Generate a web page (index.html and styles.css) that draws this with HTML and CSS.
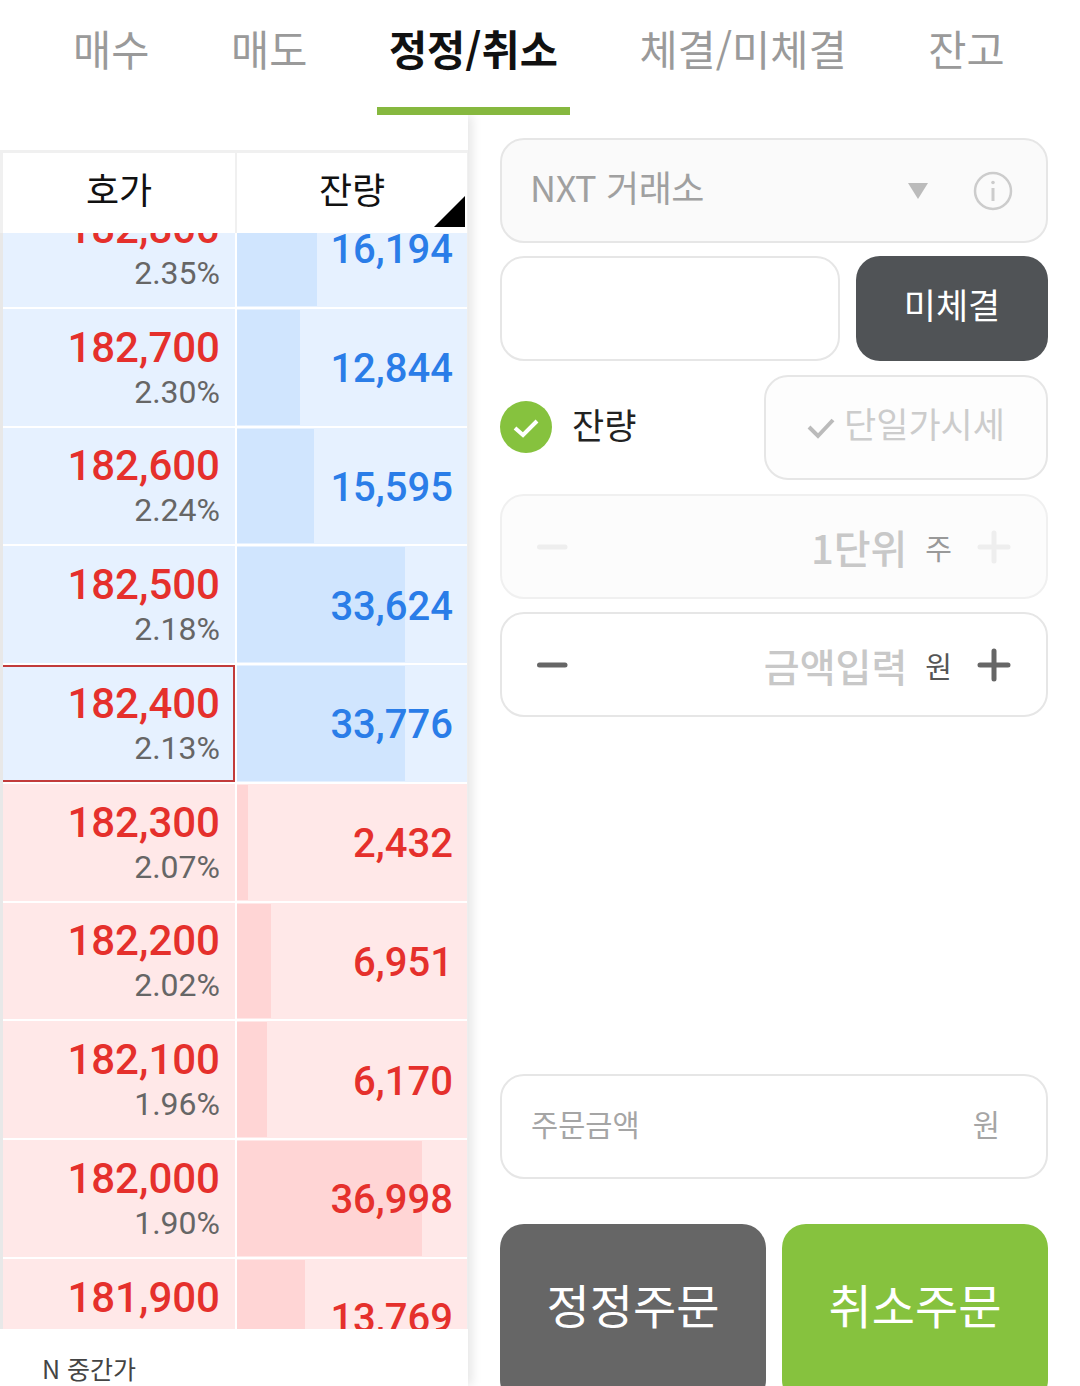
FILE: index.html
```html
<!DOCTYPE html>
<html lang="ko">
<head>
  <meta charset="UTF-8">
  <meta name="viewport" content="width=device-width, initial-scale=1.0">
  <title>정정/취소</title>
  <link rel="stylesheet" href="styles.css">
</head>
<body>
  <nav class="tabs">
    <a class="tab">매수</a>
    <a class="tab">매도</a>
    <a class="tab active">정정/취소</a>
    <a class="tab">체결/미체결</a>
    <a class="tab">잔고</a>
  </nav>

  <main class="content">
    <section class="book">
      <div class="book-head">
        <div class="head-cell">호가</div>
        <div class="head-cell">잔량
          <svg class="corner" width="31" height="31" viewBox="0 0 31 31"><path d="M31 0V31H0Z" fill="#000"/></svg>
        </div>
      </div>

      <div class="book-list">
        <div class="book-rows">
          <div class="row ask">
            <div class="price"><b>182,800</b><span>2.35%</span></div>
            <div class="volume"><i class="bar" style="width:80px"></i><b>16,194</b></div>
          </div>
          <div class="row ask">
            <div class="price"><b>182,700</b><span>2.30%</span></div>
            <div class="volume"><i class="bar" style="width:63px"></i><b>12,844</b></div>
          </div>
          <div class="row ask">
            <div class="price"><b>182,600</b><span>2.24%</span></div>
            <div class="volume"><i class="bar" style="width:77px"></i><b>15,595</b></div>
          </div>
          <div class="row ask">
            <div class="price"><b>182,500</b><span>2.18%</span></div>
            <div class="volume"><i class="bar" style="width:168px"></i><b>33,624</b></div>
          </div>
          <div class="row ask">
            <div class="price current"><b>182,400</b><span>2.13%</span></div>
            <div class="volume"><i class="bar" style="width:168px"></i><b>33,776</b></div>
          </div>
          <div class="row bid">
            <div class="price"><b>182,300</b><span>2.07%</span></div>
            <div class="volume"><i class="bar" style="width:11px"></i><b>2,432</b></div>
          </div>
          <div class="row bid">
            <div class="price"><b>182,200</b><span>2.02%</span></div>
            <div class="volume"><i class="bar" style="width:34px"></i><b>6,951</b></div>
          </div>
          <div class="row bid">
            <div class="price"><b>182,100</b><span>1.96%</span></div>
            <div class="volume"><i class="bar" style="width:30px"></i><b>6,170</b></div>
          </div>
          <div class="row bid">
            <div class="price"><b>182,000</b><span>1.90%</span></div>
            <div class="volume"><i class="bar" style="width:185px"></i><b>36,998</b></div>
          </div>
          <div class="row bid">
            <div class="price"><b>181,900</b><span>&nbsp;</span></div>
            <div class="volume"><i class="bar" style="width:68px"></i><b>13,769</b></div>
          </div>
        </div>
      </div>

      <div class="book-foot">N 중간가</div>
    </section>

    <section class="order">
      <div class="box box-select">
        <span class="select-text">NXT 거래소</span>
        <svg class="select-arrow" width="22" height="16" viewBox="0 0 22 16"><path d="M1 0H21L11 16Z" fill="#bbb"/></svg>
        <svg class="info" width="40" height="40" viewBox="0 0 40 40" fill="none" stroke="#ccc">
          <circle cx="20" cy="20" r="18" stroke-width="2.5"/>
          <path d="M20 17V30" stroke-width="3"/>
          <circle cx="20" cy="11.5" r="1.8" fill="#ccc" stroke="none"/>
        </svg>
      </div>

      <div class="line">
        <div class="box box-code"></div>
        <button class="btn-open">미체결</button>
      </div>

      <div class="line line-check">
        <label class="check">
          <svg width="52" height="52" viewBox="0 0 52 52">
            <circle cx="26" cy="26" r="26" fill="#86c23e"/>
            <path d="M15 27L23 34L37 20" fill="none" stroke="#fff" stroke-width="4"/>
          </svg>
          <span>잔량</span>
        </label>
        <div class="box box-single">
          <svg width="28" height="22" viewBox="0 0 28 22"><path d="M2 10L11 19L26 3" fill="none" stroke="#bbb" stroke-width="4"/></svg>
          <span>단일가시세</span>
        </div>
      </div>

      <div class="box stepper disabled">
        <svg class="step-icon" width="34" height="34" viewBox="0 0 34 34"><path d="M2.5 17H28" stroke-width="5" stroke-linecap="round"/></svg>
        <span class="step-value">1단위</span>
        <span class="step-unit">주</span>
        <svg class="step-icon" width="34" height="34" viewBox="0 0 34 34"><path d="M3 17H31M17 3V31" stroke-width="5" stroke-linecap="round"/></svg>
      </div>

      <div class="box stepper">
        <svg class="step-icon" width="34" height="34" viewBox="0 0 34 34"><path d="M2.5 17H28" stroke-width="5" stroke-linecap="round"/></svg>
        <span class="step-value">금액입력</span>
        <span class="step-unit">원</span>
        <svg class="step-icon" width="34" height="34" viewBox="0 0 34 34"><path d="M3 17H31M17 3V31" stroke-width="5" stroke-linecap="round"/></svg>
      </div>

      <div class="box box-amount">
        <span>주문금액</span>
        <span>원</span>
      </div>

      <div class="actions">
        <button class="btn-action btn-modify">정정주문</button>
        <button class="btn-action btn-cancel">취소주문</button>
      </div>
    </section>
  </main>
</body>
</html>
```

FILE: styles.css
```css
* {
  box-sizing: border-box;
}
html, body {
  margin: 0;
  padding: 0;
}
body {
  width: 1080px;
  height: 1386px;
  overflow: hidden;
  background: #fff;
  font-family: "Noto Sans CJK KR", "Noto Sans", sans-serif;
}
.tabs {
  display: flex;
  gap: 57.6px;
  height: 115px;
  padding-left: 61px;
}
.tab {
  height: 115px;
  padding: 19px 12px 0;
  font-size: 41.5px;
  line-height: 58px;
  font-weight: 400;
  color: #9a9a9a;
  white-space: nowrap;
}
.tab.active {
  font-weight: 700;
  color: #111;
  border-bottom: 8px solid #86b83f;
}
.content {
  display: flex;
  height: 1271px;
}

/* left: order book */
.book {
  display: flex;
  flex-direction: column;
  width: 468px;
  padding-top: 35px;
  box-shadow: 4px 0 10px rgba(0, 0, 0, 0.1);
  clip-path: inset(0 -20px 0 0);
}
.book-head {
  display: grid;
  grid-template-columns: 232px 1fr;
  column-gap: 2px;
  height: 83px;
  background: #f0f0f0;
  border-top: 3px solid #f0f0f0;
  border-left: 3px solid #f0f0f0;
  border-right: 1px solid #f0f0f0;
}
.head-cell {
  position: relative;
  display: flex;
  align-items: center;
  justify-content: center;
  padding-bottom: 10px;
  background: #fff;
  font-size: 36px;
  font-weight: 400;
  color: #111;
}
.corner {
  position: absolute;
  right: 2px;
  bottom: 6px;
}
.book-list {
  flex: 1;
  min-height: 0;
  overflow: hidden;
  border-left: 3px solid #e8e8e8;
  border-right: 1px solid #eee;
}
.book-rows {
  display: flex;
  flex-direction: column;
  gap: 2px;
  margin-top: -43px;
}
.row {
  display: grid;
  grid-template-columns: 232px 230px;
  column-gap: 2px;
  height: 116.75px;
  flex: none;
}
.row.ask .price, .row.ask .volume {
  background: #e6f1ff;
}
.row.bid .price, .row.bid .volume {
  background: #ffe8e8;
}
.price {
  display: flex;
  flex-direction: column;
  align-items: flex-end;
  justify-content: center;
  padding: 2px 15px 0 0;
  font-family: Roboto, sans-serif;
}
.price b {
  font-size: 42px;
  line-height: 48px;
  font-weight: 500;
  color: #e5302c;
}
.price span {
  margin-top: -1px;
  font-size: 32px;
  line-height: 42px;
  font-weight: 400;
  color: #666;
}
.price.current {
  border: 2px solid #c23b3b;
  border-left: none;
  padding-right: 13px;
}
.volume {
  position: relative;
  display: flex;
  align-items: center;
  justify-content: flex-end;
  padding: 4px 14px 0 0;
  font-family: Roboto, sans-serif;
}
.volume b {
  position: relative;
  font-size: 40px;
  font-weight: 500;
  line-height: 48px;
}
.row.ask .volume b {
  color: #2a7de8;
}
.row.bid .volume b {
  color: #e5302c;
}
.bar {
  position: absolute;
  left: 0;
  top: 1px;
  bottom: 1px;
}
.row.ask .bar {
  background: #d0e5fe;
}
.row.bid .bar {
  background: #ffd5d5;
}
.book-foot {
  height: 57px;
  flex: none;
  padding: 21px 0 0 42px;
  background: #fff;
  font-size: 25px;
  line-height: 36px;
  color: #444;
  font-weight: 400;
  overflow: hidden;
}

/* right: order form */
.order {
  flex: 1;
  display: flex;
  flex-direction: column;
  gap: 13px;
  padding: 23px 32px 0;
  overflow: hidden;
}
.box {
  display: flex;
  align-items: center;
  height: 105px;
  flex: none;
  background: #fff;
  border: 2px solid #e6e6e6;
  border-radius: 24px;
}
.box-select {
  padding: 0 33px 0 28px;
  background: #fafafa;
}
.select-text {
  flex: 1;
  padding-bottom: 10px;
  font-size: 36px;
  letter-spacing: -0.4px;
  font-weight: 400;
  color: #a0a0a0;
}
.select-arrow {
  margin-right: 44px;
}
.line {
  display: flex;
  gap: 16px;
  flex: none;
}
.box-code {
  width: 340px;
}
.btn-open {
  flex: 1;
  height: 105px;
  padding: 0 0 10px;
  border: none;
  border-radius: 24px;
  background: #505356;
  color: #fff;
  font-family: inherit;
  font-size: 35px;
}
.line-check {
  justify-content: space-between;
  align-items: center;
  margin-top: 1px;
}
.check {
  display: flex;
  align-items: center;
  gap: 20px;
  font-size: 35px;
  color: #222;
}
.check svg {
  margin-bottom: 1px;
}
.check span {
  padding-bottom: 8px;
}
.box-single {
  width: 284px;
  justify-content: center;
  gap: 9px;
  background: #fdfdfd;
  font-size: 35px;
  font-weight: 400;
  color: #ccc;
}
.box-single span {
  padding-bottom: 10px;
}
.stepper {
  padding: 0 35px 0 35px;
}
.step-icon {
  stroke: #666;
}
.step-value {
  margin-left: auto;
  font-weight: 500;
  color: #c8c8c8;
  font-size: 39px;
}
.step-unit {
  margin: 0 25px 0 18px;
  font-size: 29px;
  color: #555;
}
.stepper.disabled {
  margin-top: 1px;
  background: #fcfcfc;
  border-color: #f0f0f0;
}
.stepper.disabled .step-value {
  font-size: 40px;
}
.stepper.disabled .step-icon {
  stroke: #eee;
}
.stepper.disabled .step-unit {
  color: #999;
}
.box-amount {
  justify-content: space-between;
  margin-top: auto;
  padding: 0 46px 0 29px;
  font-size: 29.5px;
  color: #a5a5a5;
}
.box-amount span {
  padding-bottom: 7px;
}
.actions {
  display: flex;
  gap: 16px;
  flex: none;
  height: 180px;
  margin-top: 32px;
  margin-bottom: -18px;
}
.btn-action {
  flex: 1;
  border: none;
  border-radius: 24px;
  padding: 0 0 22px;
  color: #fff;
  font-family: inherit;
  font-size: 47px;
}
.btn-modify {
  background: #666;
}
.btn-cancel {
  background: #86c23e;
}
```
